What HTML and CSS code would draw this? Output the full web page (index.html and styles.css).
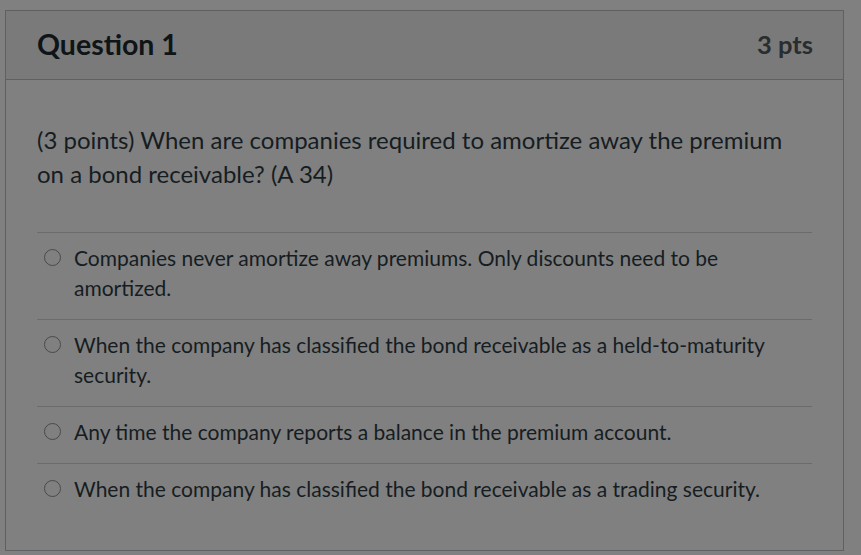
FILE: index.html
```html
<!DOCTYPE html>
<html lang="en">
<head>
<meta charset="utf-8">
<title>Question 1</title>
<link rel="stylesheet" href="styles.css">
</head>
<body>
<div class="card">
  <div class="card-header">
    <h2 class="title">Question 1</h2>
    <span class="points">3 pts</span>
  </div>
  <div class="card-body">
    <p class="question">(3 points) When are companies required to amortize away the premium on a bond receivable? (A 34)</p>
    <ul class="answers">
      <li class="answer"><span class="radio"></span><span class="answer-text">Companies never amortize away premiums. Only discounts need to be amortized.</span></li>
      <li class="answer"><span class="radio"></span><span class="answer-text">When the company has classified the bond receivable as a held-to-maturity security.</span></li>
      <li class="answer"><span class="radio"></span><span class="answer-text">Any time the company reports a balance in the premium account.</span></li>
      <li class="answer"><span class="radio"></span><span class="answer-text">When the company has classified the bond receivable as a trading security.</span></li>
    </ul>
  </div>
</div>
</body>
</html>
```
FILE: styles.css
```css
html, body {
  margin: 0;
  padding: 0;
  background: #808080;
  font-family: Lato, "Open Sans", sans-serif;
  color: #161d22;
}
body {
  padding: 10px 0 0 5px;
  height: 555px;
  box-sizing: border-box;
  overflow: hidden;
}
.card {
  width: 839px;
  height: 541px;
  box-sizing: border-box;
  border: 1px solid #5e6163;
  background: #808080;
}
.card-header {
  height: 69px;
  box-sizing: border-box;
  border-bottom: 1px solid #5e6163;
  background: #7a7a7a;
  display: flex;
  align-items: center;
  justify-content: space-between;
  padding: 0 30px 3px 31px;
}
.title {
  margin: 0;
  font-size: 28.5px;
  font-weight: 700;
  color: #0f1417;
}
.points {
  font-size: 25.5px;
  font-weight: 700;
  color: #2a2d30;
}
.card-body {
  padding: 43px 30px 0 31px;
}
.question {
  margin: 0 0 41px;
  font-size: 24px;
  line-height: 34px;
  width: 770px;
}
.answers {
  list-style: none;
  margin: 0;
  padding: 0;
  width: 775px;
}
.answer {
  border-top: 1px solid #6b6b6b;
  display: flex;
  align-items: flex-start;
  padding: 10px 30px 16px 7px;
  font-size: 21px;
  line-height: 30px;
}
.radio {
  flex: none;
  width: 15px;
  height: 15px;
  border: 1.5px solid #474a4c;
  border-radius: 50%;
  margin: 6px 13px 0 0;
}
.answer-text {
  flex: 1;
}
```
